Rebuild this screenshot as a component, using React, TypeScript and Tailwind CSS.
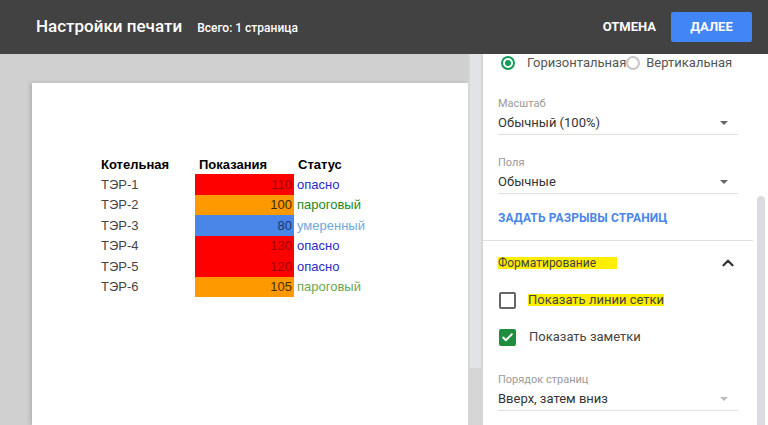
import { ChevronUp, Check } from 'lucide-react'

const rows = [
  { name: 'ТЭР-1', val: 110, bg: 'bg-[#ff0000]', num: 'text-[#a00000]', status: 'опасно', sc: 'text-[#2b2bc8]' },
  { name: 'ТЭР-2', val: 100, bg: 'bg-[#ff9900]', num: 'text-[#3a2a00]', status: 'пароговый', sc: 'text-[#1a8a1a]' },
  { name: 'ТЭР-3', val: 80, bg: 'bg-[#4a86e8]', num: 'text-[#1c3566]', status: 'умеренный', sc: 'text-[#6fa8dc]' },
  { name: 'ТЭР-4', val: 130, bg: 'bg-[#ff0000]', num: 'text-[#a00000]', status: 'опасно', sc: 'text-[#2b2bc8]' },
  { name: 'ТЭР-5', val: 120, bg: 'bg-[#ff0000]', num: 'text-[#a00000]', status: 'опасно', sc: 'text-[#2b2bc8]' },
  { name: 'ТЭР-6', val: 105, bg: 'bg-[#ff9900]', num: 'text-[#4a3000]', status: 'пароговый', sc: 'text-[#6aa84f]' },
]

function Select({ label, value, top, arrow = 'border-t-[#666]' }: { label: string; value: string; top: string; arrow?: string }) {
  return (
    <div className={top}>
      <div className="text-[11px] text-[#9a9a9a] leading-[14px]">{label}</div>
      <div className="flex items-center justify-between border-b border-[#e0e0e0] h-[24px] w-[240px]">
        <span className="text-[13px] text-[#333]">{value}</span>
        <span className={`mr-[10px] w-0 h-0 border-l-[4px] border-r-[4px] border-t-[4px] border-l-transparent border-r-transparent ${arrow}`} />
      </div>
    </div>
  )
}

export default function App() {
  return (
    <div className="w-[768px] h-[425px] overflow-hidden flex flex-col font-['Roboto',sans-serif] bg-[#d0d0d0]">
      {/* header */}
      <div className="h-[54px] shrink-0 bg-[#424242] flex items-center pl-[36px] pr-[16px]">
        <span className="text-white text-[17px] font-medium">Настройки печати</span>
        <span className="text-white text-[12px] font-medium ml-[15px] mt-[1px]">Всего: 1 страница</span>
        <span className="ml-auto text-white text-[13px] font-bold">ОТМЕНА</span>
        <button className="ml-[15px] w-[81px] h-[30px] bg-[#4285f4] rounded-[2px] text-white text-[13px] font-bold">ДАЛЕЕ</button>
      </div>

      <div className="flex flex-1 min-h-0">
        {/* preview */}
        <div className="w-[468px] shrink-0 pt-[29px] pl-[32px] overflow-hidden">
          <div className="bg-white h-full shadow-[-2px_0_4px_rgba(0,0,0,0.15)] pt-[72px] pl-[69px] font-['Liberation_Sans',Arial,sans-serif] text-[13px]">
            <div className="flex h-[19px] items-center font-bold text-black">
              <div className="w-[94px]">Котельная</div>
              <div className="w-[99px] pl-[4px]">Показания</div>
              <div className="pl-[4px]">Статус</div>
            </div>
            {rows.map((r) => (
              <div key={r.name} className="flex h-[20.5px] items-center">
                <div className="w-[94px] text-[#444]">{r.name}</div>
                <div className={`w-[99px] h-full flex items-center justify-end pr-[2px] ${r.bg} ${r.num}`}>{r.val}</div>
                <div className={`pl-[3px] ${r.sc}`}>{r.status}</div>
              </div>
            ))}
          </div>
        </div>

        {/* preview scrollbar */}
        <div className="w-[15px] shrink-0 bg-[#d6d6d6] flex flex-col">
          <div className="h-[314px] mx-[2px] bg-[#e2e3e6]" />
        </div>

        {/* settings */}
        <div className="flex-1 bg-white flex">
          <div className="flex-1 pl-[15px]">
            <div className="flex items-center h-[18px] text-[13px] text-[#555]">
              <span className="ml-[3px] w-[14px] h-[14px] rounded-full border-2 border-[#0f9d58] flex items-center justify-center">
                <span className="w-[6px] h-[6px] rounded-full bg-[#0f9d58]" />
              </span>
              <span className="ml-[12px]">Горизонтальная</span>
              <span className="w-[14px] h-[14px] rounded-full border-2 border-[#c6c6c6]" />
              <span className="ml-[6px]">Вертикальная</span>
            </div>

            <Select label="Масштаб" value="Обычный (100%)" top="mt-[25px]" />
            <Select label="Поля" value="Обычные" top="mt-[21px]" />

            <div className="mt-[15px] text-[12px] font-bold text-[#4a86e8] tracking-[0.1px]">ЗАДАТЬ РАЗРЫВЫ СТРАНИЦ</div>

            <div className="mt-[13px] -ml-[15px] w-[270px] border-t border-[#e0e0e0]" />

            <div className="mt-[13px] flex items-center justify-between w-[240px]">
              <span className="text-[12px] text-[#444] leading-[12px] bg-[#ffee00] pr-[21px]">Форматирование</span>
              <ChevronUp size={18} strokeWidth={3} className="text-[#333] mr-[1px]" />
            </div>

            <div className="mt-[19px] flex items-center h-[18px]">
              <span className="ml-[1px] w-[17px] h-[17px] border-2 border-[#666] rounded-[2px]" />
              <span className="ml-[12px] text-[13px] text-[#444] bg-[#ffee00] leading-[12px]">Показать линии сетки</span>
            </div>

            <div className="mt-[19px] flex items-center h-[18px]">
              <span className="ml-[1px] w-[17px] h-[17px] bg-[#1e8e3e] rounded-[2px] flex items-center justify-center">
                <Check size={13} strokeWidth={3.5} className="text-white" />
              </span>
              <span className="ml-[13px] text-[13px] text-[#444]">Показать заметки</span>
            </div>

            <Select label="Порядок страниц" value="Вверх, затем вниз" top="mt-[27px]" arrow="border-t-[#bbb]" />
          </div>
          {/* panel scrollbar */}
          <div className="w-[16px] shrink-0 pt-[142px] px-[4px]">
            <div className="h-full bg-[#dadce0] rounded-t-[4px]" />
          </div>
        </div>
      </div>
    </div>
  )
}
